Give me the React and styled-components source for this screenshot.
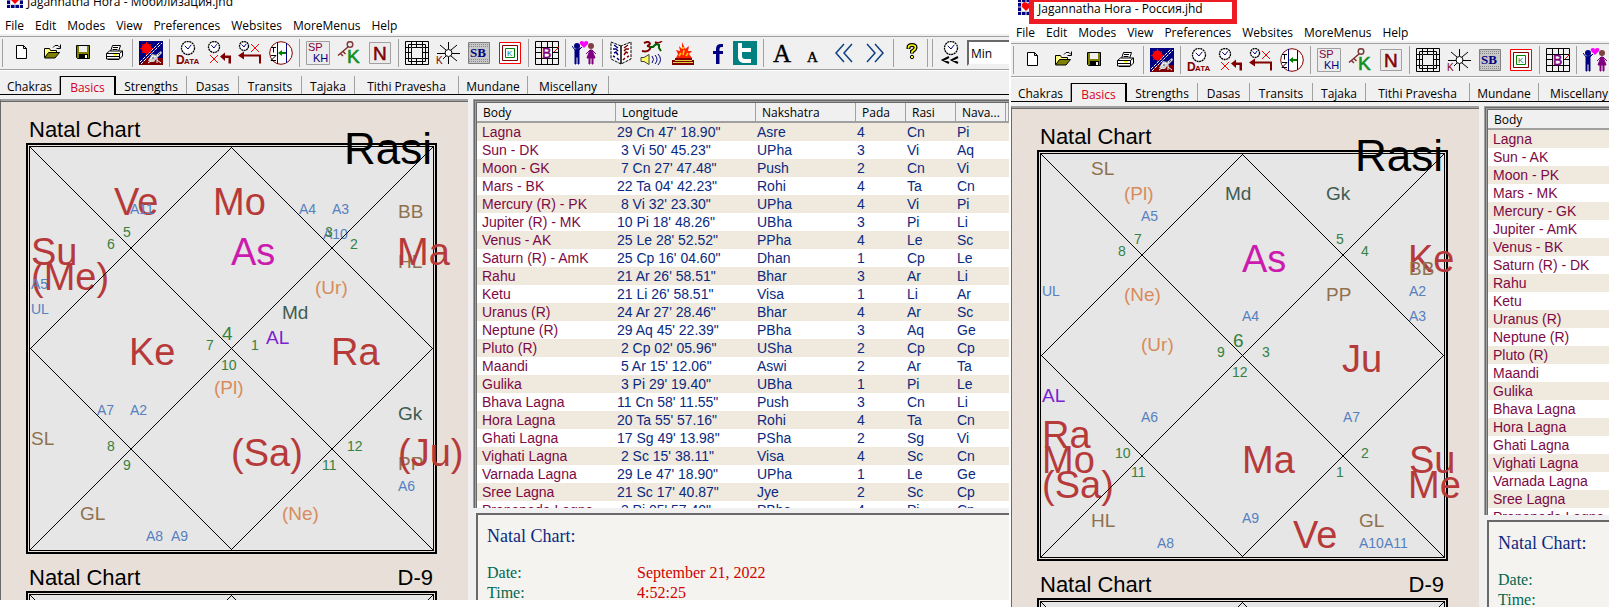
import React from 'react';
import styled, { createGlobalStyle, css } from 'styled-components';

const uiFont = '"Open Sans", "Noto Sans", sans-serif';
const arial = '"Liberation Sans", Arial, sans-serif';
const serif = '"Liberation Serif", "Times New Roman", serif';

const colors = {
  face: '#f0f0f0',
  shadow: '#a0a0a0',
  dark: '#696969',
  pane: '#e8e0d8',
  house: '#e6e6e6',
  planet: '#b73a3a',
  lagna: '#cc1aae',
  outer: '#d88c5c',
  upagraha: '#3f5c52',
  special: '#8f7150',
  arudha: '#5580c0',
  arudhaLagna: '#7a22d0',
  sign: '#37803f'
};

const menuItems = ['File', 'Edit', 'Modes', 'View', 'Preferences', 'Websites', 'MoreMenus', 'Help'];

const tabs = [
  { label: 'Chakras', width: 60 },
  { label: 'Basics', width: 56 },
  { label: 'Strengths', width: 71 },
  { label: 'Dasas', width: 52 },
  { label: 'Transits', width: 63 },
  { label: 'Tajaka', width: 53 },
  { label: 'Tithi Pravesha', width: 104 },
  { label: 'Mundane', width: 69 },
  { label: 'Miscellany', width: 81 }
];

const columns = [
  { label: 'Body', width: 139 },
  { label: 'Longitude', width: 140 },
  { label: 'Nakshatra', width: 100 },
  { label: 'Pada', width: 50 },
  { label: 'Rasi', width: 50 },
  { label: 'Nava...', width: 50 }
];

// [text, x, baseline, kind]
const mobilisationChart = [
  ['Ve', 88, 72, 'planet'],
  ['Mo', 187, 72, 'planet'],
  ['As', 205, 122, 'lagna'],
  ['HL', 372, 125, 'special'],
  ['Su', 5, 122, 'planet'],
  ['(Me)', 5, 147, 'planet'],
  ['Ma', 371, 122, 'planet'],
  ['Ke', 103, 222, 'planet'],
  ['Ra', 305, 222, 'planet'],
  ['(Sa)', 205, 323, 'planet'],
  ['PP', 372, 327, 'special'],
  ['(Ju)', 372, 323, 'planet'],
  ['(Ur)', 289, 151, 'outer'],
  ['(Pl)', 188, 251, 'outer'],
  ['(Ne)', 256, 377, 'outer'],
  ['Md', 256, 176, 'upagraha'],
  ['Gk', 372, 277, 'upagraha'],
  ['AL', 240, 201, 'arudhaLagna'],
  ['BB', 372, 75, 'special'],
  ['SL', 5, 302, 'special'],
  ['GL', 54, 377, 'special'],
  ['A11', 104, 71, 'arudha'],
  ['A4', 273, 71, 'arudha'],
  ['A3', 306, 71, 'arudha'],
  ['A10', 297, 96, 'arudha'],
  ['A5', 5, 146, 'arudha'],
  ['UL', 5, 171, 'arudha'],
  ['A7', 71, 272, 'arudha'],
  ['A2', 104, 272, 'arudha'],
  ['A6', 372, 348, 'arudha'],
  ['A8', 120, 398, 'arudha'],
  ['A9', 145, 398, 'arudha'],
  ['5', 97, 94, 'sign'],
  ['6', 81, 106, 'sign'],
  ['3', 299, 94, 'sign'],
  ['2', 324, 106, 'sign'],
  ['7', 180, 207, 'sign'],
  ['4', 196, 197, 'firstSign'],
  ['1', 225, 207, 'sign'],
  ['10', 195, 227, 'sign'],
  ['8', 81, 308, 'sign'],
  ['9', 97, 327, 'sign'],
  ['12', 321, 308, 'sign'],
  ['11', 296, 327, 'sign']
];

const russiaChart = [
  ['As', 205, 122, 'lagna'],
  ['Ke', 371, 122, 'planet'],
  ['Ju', 305, 222, 'planet'],
  ['Ra', 5, 298, 'planet'],
  ['Mo', 5, 323, 'planet'],
  ['(Sa)', 5, 348, 'planet'],
  ['Ma', 205, 323, 'planet'],
  ['Su', 372, 323, 'planet'],
  ['Me', 371, 348, 'planet'],
  ['Ve', 256, 398, 'planet'],
  ['(Pl)', 87, 50, 'outer'],
  ['(Ne)', 87, 151, 'outer'],
  ['(Ur)', 104, 201, 'outer'],
  ['Md', 188, 50, 'upagraha'],
  ['Gk', 289, 50, 'upagraha'],
  ['AL', 5, 252, 'arudhaLagna'],
  ['SL', 54, 25, 'special'],
  ['BB', 372, 125, 'special'],
  ['PP', 289, 151, 'special'],
  ['HL', 54, 377, 'special'],
  ['GL', 322, 377, 'special'],
  ['A5', 104, 71, 'arudha'],
  ['A2', 372, 146, 'arudha'],
  ['A3', 372, 171, 'arudha'],
  ['UL', 5, 146, 'arudha'],
  ['A4', 205, 171, 'arudha'],
  ['A6', 104, 272, 'arudha'],
  ['A7', 306, 272, 'arudha'],
  ['A8', 120, 398, 'arudha'],
  ['A9', 205, 373, 'arudha'],
  ['A10', 322, 398, 'arudha'],
  ['A11', 347, 398, 'arudha'],
  ['7', 97, 94, 'sign'],
  ['8', 81, 106, 'sign'],
  ['5', 299, 94, 'sign'],
  ['4', 324, 106, 'sign'],
  ['9', 180, 207, 'sign'],
  ['6', 196, 197, 'firstSign'],
  ['3', 225, 207, 'sign'],
  ['12', 195, 227, 'sign'],
  ['10', 78, 308, 'sign'],
  ['11', 94, 327, 'sign'],
  ['2', 324, 308, 'sign'],
  ['1', 299, 327, 'sign']
];

const mobilisationRows = [
  ['Lagna', '29 Cn 47\' 18.90"', 'Asre', '4', 'Cn', 'Pi'],
  ['Sun - DK', ' 3 Vi 50\' 45.23"', 'UPha', '3', 'Vi', 'Aq'],
  ['Moon - GK', ' 7 Cn 27\' 47.48"', 'Push', '2', 'Cn', 'Vi'],
  ['Mars - BK', '22 Ta 04\' 42.23"', 'Rohi', '4', 'Ta', 'Cn'],
  ['Mercury (R) - PK', ' 8 Vi 32\' 23.30"', 'UPha', '4', 'Vi', 'Pi'],
  ['Jupiter (R) - MK', '10 Pi 18\' 48.26"', 'UBha', '3', 'Pi', 'Li'],
  ['Venus - AK', '25 Le 28\' 52.52"', 'PPha', '4', 'Le', 'Sc'],
  ['Saturn (R) - AmK', '25 Cp 16\' 04.60"', 'Dhan', '1', 'Cp', 'Le'],
  ['Rahu', '21 Ar 26\' 58.51"', 'Bhar', '3', 'Ar', 'Li'],
  ['Ketu', '21 Li 26\' 58.51"', 'Visa', '1', 'Li', 'Ar'],
  ['Uranus (R)', '24 Ar 27\' 28.46"', 'Bhar', '4', 'Ar', 'Sc'],
  ['Neptune (R)', '29 Aq 45\' 22.39"', 'PBha', '3', 'Aq', 'Ge'],
  ['Pluto (R)', ' 2 Cp 02\' 05.96"', 'USha', '2', 'Cp', 'Cp'],
  ['Maandi', ' 5 Ar 15\' 12.06"', 'Aswi', '2', 'Ar', 'Ta'],
  ['Gulika', ' 3 Pi 29\' 19.40"', 'UBha', '1', 'Pi', 'Le'],
  ['Bhava Lagna', '11 Cn 58\' 11.55"', 'Push', '3', 'Cn', 'Li'],
  ['Hora Lagna', '20 Ta 55\' 57.16"', 'Rohi', '4', 'Ta', 'Cn'],
  ['Ghati Lagna', '17 Sg 49\' 13.98"', 'PSha', '2', 'Sg', 'Vi'],
  ['Vighati Lagna', ' 2 Sc 15\' 38.11"', 'Visa', '4', 'Sc', 'Cn'],
  ['Varnada Lagna', '29 Le 47\' 18.90"', 'UPha', '1', 'Le', 'Ge'],
  ['Sree Lagna', '21 Sc 17\' 40.87"', 'Jye', '2', 'Sc', 'Cp'],
  ['Pranapada Lagna', ' 3 Pi 05\' 57.40"', 'PBha', '4', 'Pi', 'Cn']
];

const russiaRows = [
  'Lagna',
  'Sun - AK',
  'Moon - PK',
  'Mars - MK',
  'Mercury - GK',
  'Jupiter - AmK',
  'Venus - BK',
  'Saturn (R) - DK',
  'Rahu',
  'Ketu',
  'Uranus (R)',
  'Neptune (R)',
  'Pluto (R)',
  'Maandi',
  'Gulika',
  'Bhava Lagna',
  'Hora Lagna',
  'Ghati Lagna',
  'Vighati Lagna',
  'Varnada Lagna',
  'Sree Lagna',
  'Pranapada Lagna'
].map(body => [body]);

const Clock = ({ x, y, r }) => (
  <g fill="none" stroke="#000">
    <circle cx={x} cy={y} r={r} fill="#fff" strokeWidth="1.3" strokeDasharray="2 0.6" />
    <path d={`M${x - r / 2} ${y - r / 3}L${x} ${y + 1}L${x + r / 2} ${y - r / 2}`} stroke="#000080" />
  </g>
);

const icons = {
  new: <path d="M7.5 4.5h7l3 3v10h-10zM14.5 4.5v3h3" fill="#fff" stroke="#000" />,
  open: (
    <>
      <path d="M4.5 16.5v-9h5l1 2h6v2" fill="#ffff80" stroke="#000" />
      <path d="M4.5 17l4-5.500h11l-4.500 5.500z" fill="#808000" stroke="#000" />
      <path d="M13 6.500l2-2h3l2 2M20.500 3.500v4h-4" fill="none" stroke="#000" />
    </>
  ),
  save: (
    <>
      <path d="M5.500 4.500h13v13h-12l-1-1z" fill="#808000" stroke="#000" />
      <path d="M8 5h8v6h-8z" fill="#f0f0f0" />
      <path d="M8 13h9v5h-9z" fill="#000" />
      <path d="M14 14h2v3h-2z" fill="#fff" />
    </>
  ),
  print: (
    <>
      <path d="M8.500 10.500l2-6h8l-2 6" fill="#fff" stroke="#000" />
      <path d="M11 6.500h5M10.500 8.500h5" stroke="#000" />
      <path d="M4.500 12.500l3-2.500h13v5l-3 3h-13z" fill="#fff" stroke="#000" />
      <path d="M4.500 12.500h13v5M17.500 12.500l3-2.500" fill="none" stroke="#000" />
      <path d="M5 15.500h12M6 18.500h11" stroke="#000" />
      <path d="M11 13h4v1.500h-4z" fill="#ffff00" />
    </>
  ),
  planets: (
    <>
      <path d="M0 0h24v24h-24z" fill="#000080" />
      <path d="M0 24l7-7h17v7z" fill="#800000" />
      <path d="M1 21L21 1M2 23L23 2" stroke="#fff" strokeDasharray="3 1" />
      <path d="M7.500 1v13M1 7.500h13M3 3l9 9M12 3l-9 9" stroke="#ff0000" />
      <circle cx="7.500" cy="7.500" r="5" fill="#ff0000" />
      <path d="M9 20l4-7 4 1 5-4 1 2-5 5-3 4-3 0z" fill="#d0d0d0" />
      <path d="M11 18l3-3M15 16l5-3M9 22l3-2M18 19l4 3M18 17v5" stroke="#fff" />
      <path d="M13 17h2M16 14h2M19 14l2-2" stroke="#555" />
    </>
  ),
  data: (
    <>
      <Clock x={12} y={7} r={6.500} />
      <text x="0" y="23" fontSize="12" fontWeight="bold" fill="#800000">D</text>
      <text x="8" y="23" fontSize="8" fontWeight="bold" fill="#800000">ATA</text>
    </>
  ),
  clockUndo: (
    <>
      <Clock x={7} y={6} r={5.500} />
      <path d="M3 14l8 8M11 14l-8 8" stroke="#ff0000" />
      <path d="M13 15.500l5-4v3h6v8h-2.500v-5.500h-3.500v3z" fill="#800000" />
    </>
  ),
  clockBack: (
    <>
      <Clock x={6} y={5} r={4.500} />
      <path d="M13 3l8 8M21 3l-8 8" stroke="#ff0000" />
      <path d="M0 14.500l6-4v3h17v9h-2v-7h-15v3z" fill="#800000" />
    </>
  ),
  timeZone: (
    <>
      <circle cx="12" cy="12" r="11.300" fill="#fff" stroke="#800000" />
      <path d="M8.500 1v22M17.500 2v20" stroke="#000080" />
      <path d="M2 6.500h5M4.500 6.500v5M2 14.500h5l-5 5h5" fill="none" stroke="#000" />
      <path d="M9 12l4-3v2h4v2h-4v2z" fill="#008000" />
    </>
  ),
  spkh: (
    <>
      <path d="M.5.5h23v23h-23z" fill="#ececec" stroke="#a0a0a0" />
      <text x="2" y="10" fontSize="11" fill="#800040">SP</text>
      <text x="7" y="21" fontSize="11" fill="#000080">KH</text>
    </>
  ),
  key: (
    <>
      <circle cx="13" cy="3.500" r="2.800" fill="none" stroke="#804040" strokeWidth="1.500" />
      <path d="M11 6L1 14.500M3 12l3 3M5.500 10l3 3" stroke="#803030" strokeWidth="1.500" fill="none" />
      <text x="10" y="22" fontSize="19" fill="#109020" stroke="#109020" strokeWidth=".6">K</text>
    </>
  ),
  navamsa: (
    <>
      <path d="M1.500 1.500h21v21h-21z" fill="#ececec" stroke="#a0a0a0" />
      <text x="5" y="19" fontSize="19" fill="#800000" stroke="#800000" strokeWidth=".5">N</text>
    </>
  ),
  grid: (
    <path
      d="M.5.5h23v23h-23zM3.500 3.500h17v17h-17zM6.500 6.500h11v11h-11zM6.500 0v6M11.500 0v6M17.500 0v6M6.500 18v6M11.500 18v6M17.500 18v6M0 6.500h6M0 11.500h6M0 17.500h6M18 6.500h6M18 11.500h6M18 17.500h6"
      fill="none"
      stroke="#000"
    />
  ),
  star: (
    <>
      <circle cx="12.500" cy="12" r="3.500" fill="#fff" stroke="#000" />
      <path d="M12.500 1v7M12.500 16v7M1 12.500h8M16 12.500h8M4 4l6 5M21 4l-6 5M21 20l-6-5M10 15l-3 3" stroke="#000" />
      <text x="0" y="23" fontSize="10" fill="#800000">K</text>
    </>
  ),
  sb: (
    <>
      <path d="M1.500 1.500h21v21h-21z" fill="#c8c8c8" stroke="#808080" />
      <path d="M2 3.500h20M2 5.500h20M2 18.500h20M2 20.500h20" stroke="#888" strokeDasharray="1 1" />
      <text x="3" y="16" fontSize="13" fontWeight="bold" fontFamily={serif} fill="#000080">SB</text>
    </>
  ),
  kBox: (
    <>
      <path d="M1.500 1.500h21v21h-21z" fill="#fff" stroke="#ff0000" />
      <path d="M4.500 4.500h15v15h-15z" fill="none" stroke="#800000" />
      <path d="M7.500 7.500h9v9h-9z" fill="none" stroke="#008000" />
      <text x="9" y="15" fontSize="8" fill="#008080">K</text>
    </>
  ),
  bhava: (
    <>
      <path d="M.5.5h23v23h-23zM.5 6.500h23M.5 17.500h23M6.500 0v24M12.500 0v6M12.500 18v6M17.500 0v24M0 11.500h6M18 11.500h6" fill="none" stroke="#000" />
      <path d="M7 7h10v10h-10z" fill="#fff" />
      <text x="7" y="17" fontSize="14" fill="#800080" stroke="#800080" strokeWidth=".5">B</text>
      <path d="M19 11l5-5" stroke="#ff0000" />
    </>
  ),
  match: (
    <>
      <path d="M12 7L8 3q-1-3 2-3 2 0 2 2 0-2 2-2 3 0 2 3z" fill="#ff00ff" />
      <circle cx="5" cy="5" r="3" fill="#000080" />
      <path d="M3 9h4l3-3M3 9L0 5M3 9h4v14H6v-7H4v7H3z" fill="#000080" stroke="#000080" />
      <circle cx="19" cy="5" r="3" fill="#804040" />
      <path d="M18 9h2l3 8h-2v6h-1v-6h-2v6h-1v-6h-2z" fill="#800080" stroke="#800080" />
      <path d="M18 9l-4 4M20 9l4 4" stroke="#800080" />
    </>
  ),
  book: (
    <>
      <path d="M12 5L2 1v17l10 5 10-5V1z" fill="#fff" stroke="#000" strokeDasharray="3 1" />
      <path d="M12 5v18" stroke="#000" strokeWidth="1.500" />
      <path d="M5 4l4 3M4 8h3l2 2M5 12l2-1 2 3M4 15l2 1M8 17l2 2" fill="none" stroke="#000080" strokeWidth="1.500" />
      <path d="M19 4l-4 3M20 8h-3l-2 2M19 12l-2-1-2 3M20 15l-2 1M16 17l-2 2" fill="none" stroke="#800000" strokeWidth="1.500" />
    </>
  ),
  om: (
    <>
      <path d="M4 2c6-3 8 2 3 3 6 0 3 7-5 5" fill="none" stroke="#800000" strokeWidth="2" />
      <path d="M9 6h4l3-3 3 1v3l2 3" fill="none" stroke="#006000" strokeWidth="2" />
      <path d="M15 1q4 2 7-1" fill="none" stroke="#800000" strokeWidth="1.500" />
      <path d="M1 16.500h3l5-3v10l-5-3H1z" fill="#ffff60" stroke="#404040" />
      <path d="M12 15q3 3.500 0 7M15 14q4 4.500 0 9M18 13q5 5.500 0 11" fill="none" stroke="#000080" />
    </>
  ),
  fire: (
    <>
      <path d="M5 17L7 13 5 9l4 1-1-5 3 3 0-7 3 7 4-3-1 5 4 0-3 3 3 4z" fill="#ff2000" />
      <path d="M8 15l2-3M12 14l1-5M15 15l2-3M12 6v2" stroke="#ffd000" strokeWidth="1.500" />
      <path d="M4 17h17v2h2v5H1v-5h3z" fill="#800000" />
      <path d="M4 19.500h17M2 21.500h20" stroke="#e0d040" />
    </>
  ),
  facebook: <path d="M14 23v-10h-3v-3h3V8q0-5 5-5h2v3h-1.500q-2 0-2 2v2H21v3h-3.500v10z" fill="#000080" />,
  twitter: (
    <>
      <path d="M0 0h24v24H0z" fill="#008080" />
      <path d="M5 2h4v5h9v4H9v4q0 3 3 3h6v4h-8q-5-1-5-6z" fill="#fff" />
    </>
  ),
  fontUp: <text x="3" y="21" fontSize="25" fontFamily={serif} fill="#000" stroke="#000" strokeWidth=".4">A</text>,
  fontDown: <text x="6" y="21" fontSize="15" fontFamily={serif} fill="#000" stroke="#000" strokeWidth=".4">A</text>,
  previous: <path d="M12 3L4 12l8 9M20 3l-8 9 8 9" fill="none" stroke="#104080" strokeWidth="1.500" />,
  next: <path d="M4 3l8 9-8 9M12 3l8 9-8 9" fill="none" stroke="#104080" strokeWidth="1.500" />,
  help: (
    <>
      <path d="M8.500 8V6.500q0-2.500 3.500-2.500t3.500 2.500q0 2-3.500 4v2" fill="none" stroke="#000" strokeWidth="4" />
      <path d="M8.500 7.500V6.500q0-2.500 3.500-2.500t3.500 2.500q0 2-3.500 4v1.500" fill="none" stroke="#ffff00" strokeWidth="1.500" />
      <circle cx="12" cy="16" r="1.700" fill="#ffff00" stroke="#000" />
    </>
  ),
  clockRewind: (
    <>
      <Clock x={12} y={7} r={6.500} />
      <path d="M10 16l-6 3 6 3M19 16l-6 3 6 3" fill="none" stroke="#000" strokeWidth="2" />
    </>
  )
};

const toolGroups = [
  [['new', 'New'], ['open', 'Open'], ['save', 'Save'], ['print', 'Print']],
  [['planets', 'Planets']],
  [['data', 'Birth data'], ['clockUndo', 'Undo time'], ['clockBack', 'Restore time'], ['timeZone', 'Time zone']],
  [['spkh', 'Special lagnas'], ['key', 'Key'], ['navamsa', 'Navamsa']],
  [['grid', 'Chakra grid'], ['star', 'Kota chakra'], ['sb', 'Sarvatobhadra'], ['kBox', 'Kalachakra']],
  [['bhava', 'Bhava chart']],
  [['match', 'Compatibility']],
  [['book', 'Book'], ['om', 'Mantra'], ['fire', 'Homa'], ['facebook', 'Facebook'], ['twitter', 'Twitter']],
  [['fontUp', 'Larger font'], ['fontDown', 'Smaller font'], ['previous', 'Previous'], ['next', 'Next']],
  [['help', 'Help topics']]
];

const AppIcon = () => (
  <svg width="16" height="16" viewBox="0 0 16 16" aria-hidden="true">
    <path d="M0 0h16v16H0z" fill="#000080" />
    <path d="M0 3.500h16M0 8h3M13 8h3M0 12.500h16M3.500 0v16M12.500 0v16M8 0v3M8 13v3" stroke="#d8d8e8" />
    <path d="M4 4h8v8H4z" fill="#fff" />
    <path d="M8 12L4 8V5l2-2 3 1 3 2v2z" fill="#ff0000" />
    <path d="M10 4h2v3z" fill="#000080" />
  </svg>
);

const ToolIcon = ({ name }) => (
  <svg width="24" height="24" viewBox="0 0 24 24" fontFamily={arial} aria-hidden="true">
    {icons[name]}
  </svg>
);

const ChartFrame = ({ labels = [], title }) => (
  <ChartSvg viewBox="0 0 411 411">
    <rect x="1" y="1" width="409" height="409" fill={colors.pane} stroke="#000" strokeWidth="2" />
    <rect x="3.500" y="3.500" width="404" height="404" fill={colors.house} stroke="#000" />
    {labels.map(([text, x, y, kind]) => (
      <ChartLabel key={text + x} x={x} y={y} $kind={kind}>
        {text}
      </ChartLabel>
    ))}
    <path
      d="M4 4L407 407M407 4L4 407M205 4L407 206M407 205L205 407M206 407L4 205M4 206L206 4"
      fill="none"
      stroke="#000"
      shapeRendering="crispEdges"
    />
    {title && (
      <ChartName x="406" y="21" textAnchor="end">
        {title}
      </ChartName>
    )}
  </ChartSvg>
);

const ChartWindow = ({ id, fileName, highlighted, lower, chart, rows, date, time }) => (
  <Window $lower={lower}>
    <TitleBar $lower={lower}>
      <AppIcon />
      <Title>
        Jagannatha Hora - {fileName}
        {highlighted && <Highlight />}
      </Title>
    </TitleBar>
    <MenuBar>
      {menuItems.map(item => (
        <MenuItem key={item} type="button">
          {item}
        </MenuItem>
      ))}
    </MenuBar>
    <Toolbar>
      {toolGroups.map(group => (
        <ToolGroup key={group[0][0]}>
          {group.map(([name, label]) => (
            <ToolButton key={name} type="button" aria-label={label}>
              <ToolIcon name={name} />
            </ToolButton>
          ))}
        </ToolGroup>
      ))}
      <TimeGroup>
        <ToolButton type="button" aria-label="Step back">
          <ToolIcon name="clockRewind" />
        </ToolButton>
        <StepSelect id={`${id}-step`} aria-label="Time step" defaultValue="Min">
          <option>Min</option>
          <option>Hour</option>
        </StepSelect>
      </TimeGroup>
    </Toolbar>
    <TabBar role="tablist">
      {tabs.map(({ label, width }) => (
        <Tab key={label} type="button" role="tab" aria-selected={label === 'Basics'} $width={width} $active={label === 'Basics'}>
          {label}
        </Tab>
      ))}
    </TabBar>
    <Body>
      <ChartPane>
        <ChartHeader>
          <h2>Natal Chart</h2>
        </ChartHeader>
        <ChartFrame labels={chart} title="Rasi" />
        <ChartHeader>
          <h2>Natal Chart</h2>
          <span>D-9</span>
        </ChartHeader>
        <ChartFrame />
      </ChartPane>
      <SidePane>
        <ListPane>
          <BodyTable>
            <colgroup>
              {columns.slice(0, rows[0].length).map(({ label, width }) => (
                <Column key={label} $width={width} />
              ))}
              <col />
            </colgroup>
            <thead>
              <tr>
                {columns.slice(0, rows[0].length).map(({ label }) => (
                  <th key={label}>{label}</th>
                ))}
                <th />
              </tr>
            </thead>
            <tbody>
              {rows.map(row => (
                <tr key={row[0]}>
                  {row.map((cell, i) => (
                    <td key={columns[i].label}>{cell}</td>
                  ))}
                  <td />
                </tr>
              ))}
            </tbody>
          </BodyTable>
        </ListPane>
        <Details>
          <h3>Natal Chart:</h3>
          <dl>
            <dt>Date:</dt>
            <dd>{date}</dd>
            <dt>Time:</dt>
            <dd>{time}</dd>
          </dl>
        </Details>
      </SidePane>
    </Body>
  </Window>
);

const App = () => (
  <>
    <GlobalStyle />
    <Desktop>
      <ChartWindow
        id="mobilisation"
        fileName="Мобилизация.jhd"
        chart={mobilisationChart}
        rows={mobilisationRows}
        date="September 21, 2022"
        time="4:52:25"
      />
      <ChartWindow id="russia" fileName="Россия.jhd" highlighted lower chart={russiaChart} rows={russiaRows} />
    </Desktop>
  </>
);

export default App;

const GlobalStyle = createGlobalStyle`
  * {
    box-sizing: border-box;
  }

  body {
    margin: 0;
    background: #fff;
    font-family: ${uiFont};
    font-size: 12px;
    color: #000;
  }

  h2, h3, dl, dd {
    margin: 0;
    font-weight: 400;
  }

  button {
    border: none;
    padding: 0;
    background: none;
    font: inherit;
    color: inherit;
  }
`;

const Desktop = styled.main`
  display: grid;
  grid-template-columns: 1009fr 598fr;
  gap: 2px;
  height: 100vh;
  overflow: hidden;
`;

const Window = styled.section`
  display: flex;
  flex-direction: column;
  min-width: 0;
  min-height: 0;
  overflow: hidden;
  background: #fff;
  margin-bottom: ${({ $lower }) => ($lower ? 0 : '7px')};
`;

const TitleBar = styled.header`
  flex: none;
  display: flex;
  align-items: center;
  gap: 4px;
  height: 32px;
  padding-left: 7px;
  margin-top: ${({ $lower }) => ($lower ? '-9px' : '-16px')};
`;

const Title = styled.h1`
  position: relative;
  margin: 0;
  padding-top: 3px;
  font-size: 12px;
  line-height: 16px;
  font-weight: 400;
  white-space: nowrap;
`;

const Highlight = styled.span`
  position: absolute;
  top: -1px;
  left: -9px;
  width: 208px;
  height: 27px;
  border: 5px solid #ed1c24;
`;

const MenuBar = styled.nav`
  flex: none;
  display: flex;
  gap: 11px;
  height: 20px;
  padding-left: 5px;
  border-bottom: 2px solid ${colors.face};
`;

const MenuItem = styled.button`
  padding-top: 2px;
  line-height: 16px;
  white-space: nowrap;
`;

const Toolbar = styled.div`
  flex: none;
  display: flex;
  align-items: center;
  height: 34px;
  padding-left: 2px;
  background: ${colors.face};
  border-top: 1px solid ${colors.shadow};
  border-bottom: 1px solid ${colors.shadow};
`;

const ToolGroup = styled.div`
  flex: none;
  display: flex;
  align-items: center;
  height: 28px;
  padding: 0 3px 0 2px;
  border-left: 1px solid ${colors.shadow};
`;

const TimeGroup = styled(ToolGroup)`
  margin-left: 2px;
  box-shadow: -4px 0 ${colors.face}, -5px 0 ${colors.shadow};
`;

const ToolButton = styled.button`
  display: flex;
  align-items: center;
  justify-content: center;
  width: 31px;
  height: 28px;
`;

const StepSelect = styled.select`
  appearance: none;
  width: 70px;
  height: 26px;
  margin-left: 1px;
  padding: 0 2px;
  border: 2px solid ${colors.face};
  border-top-color: ${colors.dark};
  border-left-color: ${colors.dark};
  border-radius: 0;
  background: #fff;
  color: #000;
  font-family: ${uiFont};
  font-size: 12px;
`;

const TabBar = styled.div`
  flex: none;
  display: flex;
  height: 25px;
  padding-top: 5px;
  background: ${colors.face};
  border-top: 1px solid #fff;
  border-bottom: 1px solid #000;
`;

const Tab = styled.button`
  flex: none;
  width: ${({ $width }) => $width}px;
  padding-top: 3px;
  border-right: 1px solid ${colors.shadow};
  line-height: 16px;
  white-space: nowrap;

  ${({ $active }) =>
    $active &&
    css`
      margin-bottom: -1px;
      color: #d8001c;
      background: ${colors.face};
      border: 1px solid #000;
      border-right-width: 2px;
      border-bottom: none;
    `}
`;

const Body = styled.div`
  flex: 1;
  display: flex;
  gap: 5px;
  min-height: 0;
  padding-top: 4px;
  background: ${colors.face};
`;

const ChartPane = styled.div`
  flex: none;
  width: 468px;
  padding: 5px 31px 0 25px;
  background: ${colors.pane};
  border-top: 2px solid ${colors.shadow};
  border-left: 1px solid ${colors.dark};
  box-shadow: inset 0 1px ${colors.dark};
  overflow: hidden;
`;

const ChartHeader = styled.div`
  display: flex;
  align-items: flex-end;
  justify-content: space-between;
  height: 37px;
  padding: 0 4px 0 3px;
  font-family: ${arial};
  font-size: 22px;
  line-height: 26px;

  h2 {
    font-size: inherit;
  }
`;

const ChartSvg = styled.svg`
  display: block;
  width: 100%;
  overflow: visible;
`;

const labelSizes = {
  planet: 38,
  lagna: 38,
  arudha: 14,
  sign: 14
};

const ChartLabel = styled.text`
  font-family: ${arial};
  font-size: ${({ $kind }) => labelSizes[$kind] || 19}px;
  fill: ${({ $kind }) => colors[$kind] || colors.sign};
`;

const ChartName = styled.text`
  font-family: ${arial};
  font-size: 44px;
`;

const SidePane = styled.div`
  flex: 1;
  display: flex;
  flex-direction: column;
  min-width: 0;
`;

const ListPane = styled.div`
  flex: none;
  height: 409px;
  padding: 4px 0 0 4px;
  background: #fff;
  overflow: hidden;
  box-shadow: inset 1px 1px ${colors.shadow}, inset 2px 2px ${colors.dark}, inset 3px 3px ${colors.shadow},
    inset 4px 4px ${colors.dark};
`;

const Column = styled.col`
  width: ${({ $width }) => $width}px;
`;

const BodyTable = styled.table`
  width: 100%;
  table-layout: fixed;
  border-collapse: separate;
  border-spacing: 0;
  text-align: left;
  white-space: pre;

  th {
    height: 20px;
    padding: 2px 0 0 6px;
    background: ${colors.face};
    border-right: 1px solid ${colors.shadow};
    border-bottom: 2px solid ${colors.shadow};
    font-size: 12px;
    line-height: 16px;
    font-weight: 400;
  }

  td {
    height: 18px;
    padding: 0 0 0 1px;
    color: #0a2a80;
    font-family: ${arial};
    font-size: 14px;
    line-height: 18px;
  }

  td:first-child {
    padding-left: 5px;
    color: #7c0a45;
  }

  tbody tr:nth-child(odd) {
    background: #f0e9de;
  }
`;

const Details = styled.div`
  flex: 1;
  min-height: 0;
  margin: 5px 0 0 3px;
  padding: 11px 0 0 9px;
  background: #f4f3ef;
  border-top: 2px solid ${colors.dark};
  border-left: 2px solid ${colors.dark};
  font-family: ${serif};
  overflow: hidden;

  h3 {
    margin-bottom: 17px;
    color: #0a2a80;
    font-size: 18px;
    line-height: 20px;
  }

  dl {
    display: grid;
    grid-template-columns: 150px 1fr;
    font-size: 16px;
    line-height: 20px;
  }

  dt {
    color: #006850;
  }

  dd {
    color: #d00000;
  }
`;
